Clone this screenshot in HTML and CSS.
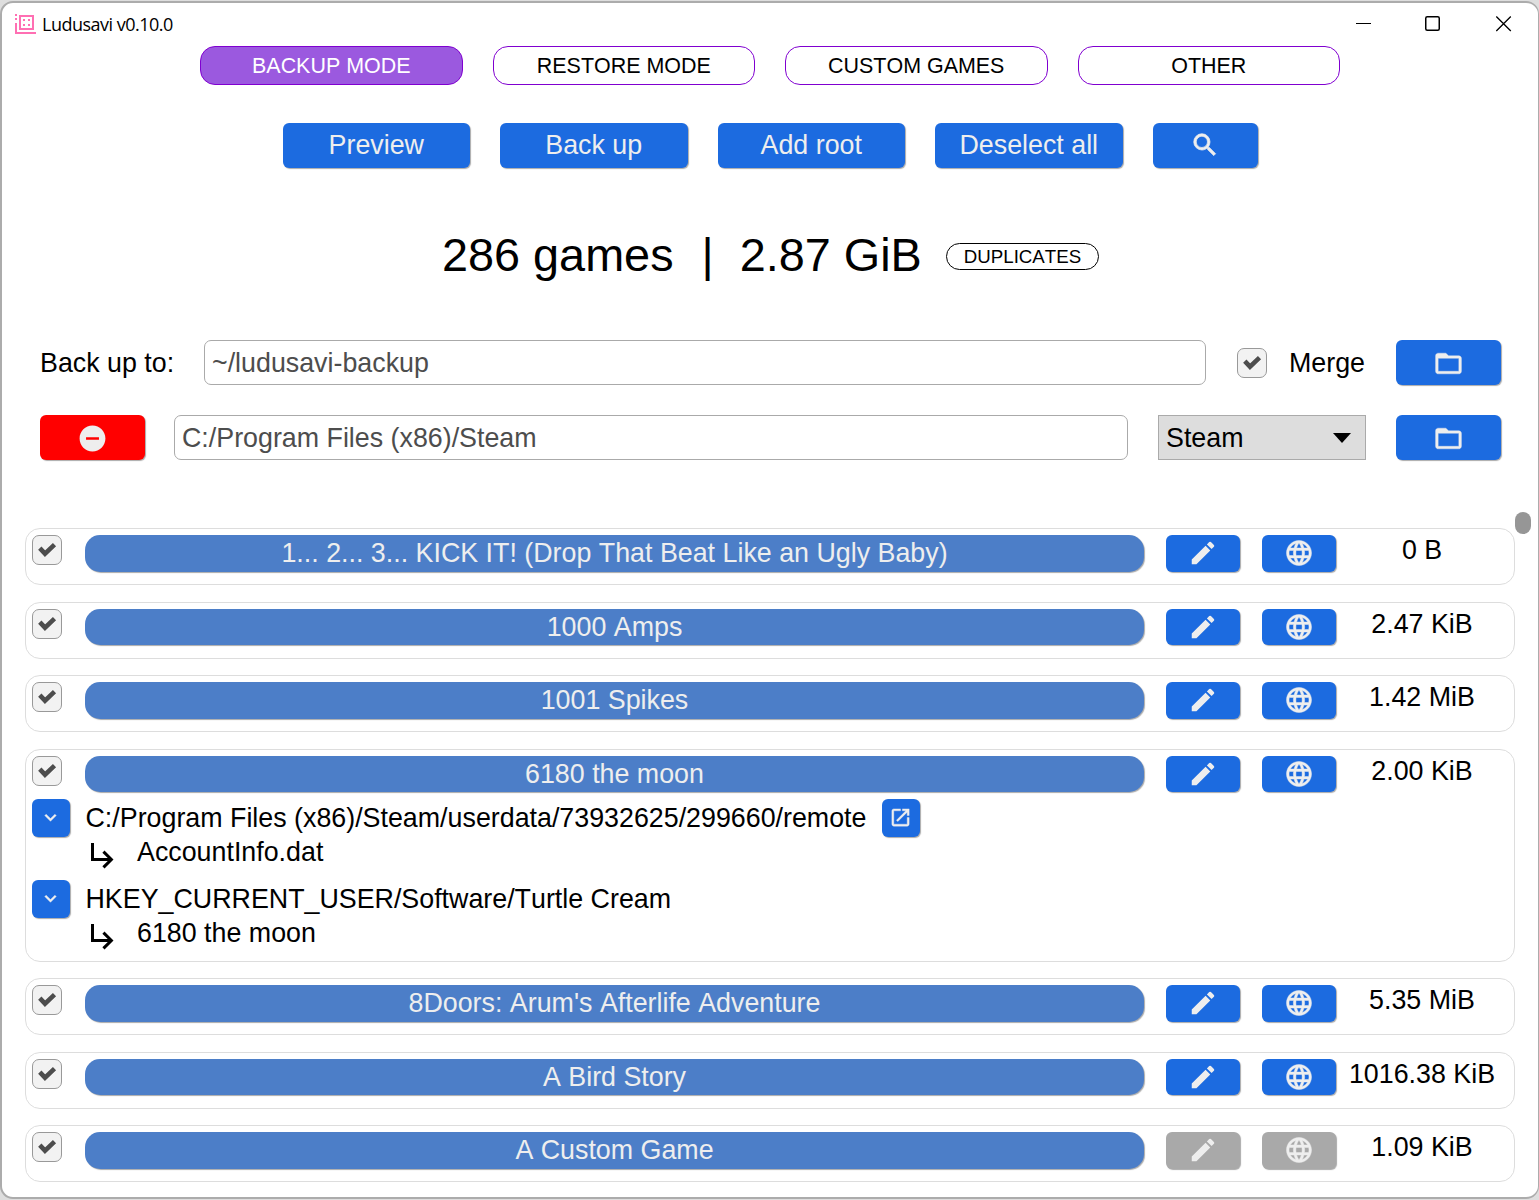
FILE: index.html
```html
<!DOCTYPE html>
<html lang="en">
<head>
<meta charset="utf-8">
<title>Ludusavi v0.10.0</title>
<link rel="stylesheet" href="styles.css">
</head>
<body>
<svg class="defs" aria-hidden="true">
  <symbol id="check" viewBox="0 0 28 28"><path d="M6.800 12.200 L12 17.700 L21.500 8.600" fill="none" stroke="#4d4d4d" stroke-width="4.600"/></symbol>
  <symbol id="search" viewBox="0 0 24 24"><path stroke="#eee" stroke-width=".6" d="M15.500 14h-.79l-.28-.27A6.470 6.470 0 0 0 16 9.500 6.500 6.500 0 1 0 9.500 16c1.610 0 3.090-.59 4.230-1.570l.27.28v.79l5 4.990L20.490 19l-4.990-5zm-6 0C7.010 14 5 11.990 5 9.500S7.010 5 9.500 5 14 7.010 14 9.500 11.990 14 9.500 14z"/></symbol>
  <symbol id="folder" viewBox="0 0 24 24"><path stroke="#eee" stroke-width=".3" d="M20 6h-8l-2-2H4c-1.1 0-1.990.9-1.990 2L2 18c0 1.100.9 2 2 2h16c1.100 0 2-.9 2-2V8c0-1.100-.9-2-2-2zm0 12H4V8h16v10z"/></symbol>
  <symbol id="remove" viewBox="0 0 24 24"><path d="M12 2C6.480 2 2 6.480 2 12s4.480 10 10 10 10-4.480 10-10S17.520 2 12 2zm5 11H7v-2h10v2z"/></symbol>
  <symbol id="edit" viewBox="0 0 24 24"><path d="M3 17.250V21h3.750L17.810 9.940l-3.750-3.750L3 17.250zM20.710 7.040a1 1 0 0 0 0-1.410l-2.340-2.340a1 1 0 0 0-1.410 0l-1.830 1.830 3.750 3.750 1.830-1.830z"/></symbol>
  <symbol id="globe" viewBox="0 0 24 24"><path stroke="#eee" stroke-width=".35" d="M11.990 2C6.470 2 2 6.480 2 12s4.470 10 9.990 10C17.520 22 22 17.520 22 12S17.520 2 11.990 2zm6.930 6h-2.950c-.32-1.250-.78-2.450-1.380-3.560 1.840.63 3.370 1.910 4.330 3.560zM12 4.040c.83 1.200 1.480 2.530 1.910 3.960h-3.820c.43-1.430 1.080-2.760 1.910-3.960zM4.260 14C4.100 13.360 4 12.690 4 12s.1-1.360.26-2h3.380c-.08.66-.14 1.320-.14 2s.06 1.340.14 2H4.260zm.82 2h2.950c.32 1.250.78 2.450 1.380 3.560-1.840-.63-3.370-1.900-4.330-3.560zm2.950-8H5.080c.96-1.660 2.490-2.930 4.330-3.560C8.810 5.550 8.350 6.750 8.030 8zM12 19.960c-.83-1.200-1.480-2.530-1.910-3.960h3.820c-.43 1.430-1.080 2.760-1.910 3.960zM14.340 14H9.660c-.09-.66-.16-1.320-.16-2s.07-1.350.16-2h4.680c.09.65.16 1.320.16 2s-.07 1.340-.16 2zm.25 5.560c.6-1.110 1.060-2.310 1.380-3.560h2.950c-.96 1.650-2.490 2.930-4.330 3.560zM16.360 14c.08-.66.14-1.320.14-2s-.06-1.340-.14-2h3.380c.16.64.26 1.310.26 2s-.1 1.360-.26 2h-3.380z"/></symbol>
  <symbol id="down" viewBox="0 0 24 24"><path stroke="#eee" stroke-width=".4" d="M7.410 8.590 12 13.170l4.590-4.580L18 10l-6 6-6-6z"/></symbol>
  <symbol id="open" viewBox="0 0 24 24"><path stroke="#eee" stroke-width=".4" d="M19 19H5V5h7V3H5c-1.110 0-2 .9-2 2v14c0 1.100.89 2 2 2h14c1.100 0 2-.9 2-2v-7h-2v7zM14 3v2h3.590l-9.830 9.830 1.410 1.410L19 6.410V10h2V3h-7z"/></symbol>
  <symbol id="sub" viewBox="0 0 24 24"><path d="m19 15-6 6-1.420-1.420L15.170 16H4V4h2v10h9.170l-3.590-3.580L13 9l6 6z"/></symbol>
</svg>
<div class="window">
  <header class="titlebar">
    <svg class="logo" viewBox="0 0 21 20" shape-rendering="crispEdges"><path d="M0 0h2v2H0zM0 4h2v2H0zM0 9h2v9h19v2H0z" fill="#ff6fb3"/><path d="M5 2h13v13H5z" fill="#fff" stroke="#ff6fb3" stroke-width="2"/><path d="M8 5h2v2H8zM13 5h2v2h-2zM8 10h2v2H8zM13 10h2v2h-2z" fill="#ff6fb3"/></svg>
    <span class="title">Ludusavi v0.10.0</span>
    <svg class="controls" viewBox="0 0 156 16" fill="none" stroke="#000"><path d="M0 7.500h15"/><rect x="69.750" y=".75" width="13.500" height="13.500" rx="1.500" stroke-width="1.500"/><path d="M140.300.5l14.500 14.500M154.800.5l-14.500 14.500" stroke-width="1.300"/></svg>
  </header>
  <nav class="tabs">
    <div class="tab active">BACKUP MODE</div><div class="tab">RESTORE MODE</div><div class="tab">CUSTOM GAMES</div><div class="tab">OTHER</div>
  </nav>
  <div class="actions">
    <div class="btn">Preview</div><div class="btn">Back up</div><div class="btn">Add root</div><div class="btn">Deselect all</div>
    <div class="btn small"><svg class="icon"><use href="#search"/></svg></div>
  </div>
  <div class="summary"><span class="total">286 games&nbsp; <span class="pipe">|</span>&nbsp; 2.87 GiB</span><span class="badge">DUPLICATES</span></div>
  <div class="settings">
    <div class="setting">
      <span class="label">Back up to:</span><div class="input">~/ludusavi-backup</div>
      <svg class="check merge"><use href="#check"/></svg><span class="merge-label">Merge</span>
      <div class="btn small"><svg class="icon folder"><use href="#folder"/></svg></div>
    </div>
    <div class="setting">
      <div class="btn small danger"><svg class="icon remove"><use href="#remove"/></svg></div><div class="input root">C:/Program Files (x86)/Steam</div>
      <div class="select">Steam<svg class="caret" viewBox="0 0 18 10"><path d="M0 0h18L9 10z"/></svg></div>
      <div class="btn small"><svg class="icon folder"><use href="#folder"/></svg></div>
    </div>
  </div>
  <main class="games">
    <article class="game"><div class="head"><svg class="check"><use href="#check"/></svg><div class="name">1... 2... 3... KICK IT! (Drop That Beat Like an Ugly Baby)</div><div class="act"><svg class="icon"><use href="#edit"/></svg></div><div class="act"><svg class="icon"><use href="#globe"/></svg></div><div class="size">0 B</div></div></article>
    <article class="game"><div class="head"><svg class="check"><use href="#check"/></svg><div class="name">1000 Amps</div><div class="act"><svg class="icon"><use href="#edit"/></svg></div><div class="act"><svg class="icon"><use href="#globe"/></svg></div><div class="size">2.47 KiB</div></div></article>
    <article class="game"><div class="head"><svg class="check"><use href="#check"/></svg><div class="name">1001 Spikes</div><div class="act"><svg class="icon"><use href="#edit"/></svg></div><div class="act"><svg class="icon"><use href="#globe"/></svg></div><div class="size">1.42 MiB</div></div></article>
    <article class="game expanded">
      <div class="head"><svg class="check"><use href="#check"/></svg><div class="name">6180 the moon</div><div class="act"><svg class="icon"><use href="#edit"/></svg></div><div class="act"><svg class="icon"><use href="#globe"/></svg></div><div class="size">2.00 KiB</div></div>
      <div class="tree">
        <div class="path"><div class="mini"><svg><use href="#down"/></svg></div><span>C:/Program Files (x86)/Steam/userdata/73932625/299660/remote</span><div class="mini"><svg class="open"><use href="#open"/></svg></div></div>
        <div class="leaf"><svg><use href="#sub"/></svg><span>AccountInfo.dat</span></div>
        <div class="path"><div class="mini"><svg><use href="#down"/></svg></div><span>HKEY_CURRENT_USER/Software/Turtle Cream</span></div>
        <div class="leaf"><svg><use href="#sub"/></svg><span>6180 the moon</span></div>
      </div>
    </article>
    <article class="game"><div class="head"><svg class="check"><use href="#check"/></svg><div class="name">8Doors: Arum's Afterlife Adventure</div><div class="act"><svg class="icon"><use href="#edit"/></svg></div><div class="act"><svg class="icon"><use href="#globe"/></svg></div><div class="size">5.35 MiB</div></div></article>
    <article class="game"><div class="head"><svg class="check"><use href="#check"/></svg><div class="name">A Bird Story</div><div class="act"><svg class="icon"><use href="#edit"/></svg></div><div class="act"><svg class="icon"><use href="#globe"/></svg></div><div class="size">1016.38 KiB</div></div></article>
    <article class="game"><div class="head"><svg class="check"><use href="#check"/></svg><div class="name">A Custom Game</div><div class="act disabled"><svg class="icon"><use href="#edit"/></svg></div><div class="act disabled"><svg class="icon"><use href="#globe"/></svg></div><div class="size">1.09 KiB</div></div></article>
  </main>
  <div class="scroll-thumb"></div>
</div>
</body>
</html>
```
FILE: styles.css
```css
* { box-sizing: border-box; }
body {
  margin: 0;
  height: 1200px;
  padding-top: 1px;
  overflow: hidden;
  background: #dedede;
  font: 26.82px/30px "Liberation Sans", Arial, sans-serif;
  font-kerning: none;
  color: #000;
}
svg { display: block; flex: none; }
.defs { position: absolute; width: 0; height: 0; }
.window {
  position: relative;
  height: 1198px;
  background: #fff;
  border: 2px solid #acacac;
  border-right-width: 1px;
  border-radius: 13px;
  overflow: hidden;
}
.titlebar { display: flex; align-items: center; height: 43px; padding: 0 0 2px 13px; }
.logo { width: 21px; height: 20px; }
.title { font: 18px/24px "Open Sans", "Noto Sans", sans-serif; margin-left: 6px; letter-spacing: -0.5px; }
.controls { width: 156px; height: 16px; margin: 0 26px 0 auto; }
.tabs { display: flex; justify-content: center; gap: 30px; }
.tab {
  width: 262.500px;
  height: 39px;
  border: 1.500px solid #8000d0;
  border-radius: 15px;
  font-size: 21.45px;
  line-height: 38px;
  text-align: center;
}
.tab.active { background: #9b59df; color: #fff; }
.btn, .act, .mini, .name {
  display: flex;
  align-items: center;
  justify-content: center;
  flex: none;
  background: #1c6be0;
  color: #eee;
  fill: #eee;
  border-radius: 6px;
  box-shadow: 1px 1px 1px #aaa;
}
.btn { width: 187.500px; height: 45px; }
.btn.small { width: 105px; }
.btn.danger { background: #f00; }
.actions { display: flex; justify-content: center; gap: 30px; margin-top: 38px; }
.actions .btn { padding-bottom: 1px; }
.icon { width: 30px; height: 30px; }
.summary { display: flex; align-items: center; height: 60px; margin-top: 58px; padding-left: 440px; }
.total { font-size: 46.8px; line-height: 52px; white-space: pre; margin-bottom: 2px; width: 480px; }
.pipe { padding-left: 2px; }
.badge {
  width: 153px;
  height: 27px;
  margin-left: 24px;
  border: 1.500px solid #000;
  border-radius: 14px;
  font-size: 18.700px;
  line-height: 25px;
  text-align: center;
}
.settings { display: flex; flex-direction: column; gap: 30px; padding: 54px 37px 0 38px; }
.setting { display: flex; align-items: center; height: 45px; }
.label { width: 164px; }
.input {
  width: 1002px;
  height: 45px;
  padding-left: 7px;
  border: 1px solid #aaa;
  border-radius: 7px;
  color: #4d4d4d;
  line-height: 45px;
}
.input.root { width: 954px; margin-left: 29px; }
.check { width: 30px; height: 30px; background: #f2f2f2; border: 1px solid #999; border-radius: 7px; }
.merge { margin-left: 31px; }
.merge-label { margin-left: 22px; }
.setting .btn:last-child { margin-left: auto; }
.setting .btn { padding: 1px 1px 0 0; }
.folder, .remove { width: 31px; height: 31px; }
.select {
  display: flex;
  align-items: center;
  width: 208px;
  height: 45px;
  margin-left: 30px;
  padding: 0 14px 0 7px;
  background: #ddd;
  border: 1px solid #aaa;
}
.caret { width: 18px; height: 10px; margin-left: auto; }
.games { display: flex; flex-direction: column; gap: 16.500px; padding: 68px 23px 0 23px; }
.game { flex: none; height: 57px; padding: 6px; border: 1px solid #ddd; border-radius: 15px; }
.expanded { height: 213px; }
.head { display: flex; align-items: flex-start; height: 37px; }
.name { width: 1059px; height: 36.500px; margin-left: 23px; background: #4c7ec8; border-radius: 15px; }
.act { width: 74px; height: 36.500px; margin-left: 22px; }
.act.disabled { background: #a9a9a9; }
.size { width: 156px; margin-left: 8px; text-align: center; line-height: 30px; }
.tree { margin-top: 6px; }
.path { display: flex; align-items: center; height: 38px; gap: 15.500px; }
.mini { width: 38px; height: 38px; padding-right: 1px; }
.mini svg { width: 23px; height: 23px; }
.leaf { display: flex; align-items: flex-start; height: 43px; padding-left: 53px; line-height: 31px; }
.leaf svg { width: 36px; height: 36px; }
.leaf span { margin-left: 16px; }
.scroll-thumb {
  position: absolute;
  right: 7px;
  top: 509px;
  width: 16px;
  height: 22px;
  border-radius: 8px;
  background: #969696;
}
```
